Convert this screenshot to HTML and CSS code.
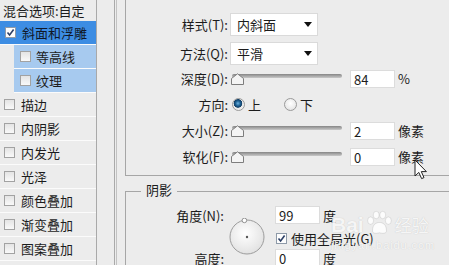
FILE: index.html
```html
<!DOCTYPE html>
<html lang="zh-CN">
<head>
  <meta charset="UTF-8">
  <title>图层样式 - 斜面和浮雕</title>
  <link rel="stylesheet" href="styles.css">
</head>
<body>
  <div class="dialog">
    <!-- 左侧样式列表 -->
    <ul class="style-list">
      <li class="head">混合选项:自定</li>
      <li class="active"><span class="cb checked"><svg viewBox="0 0 9 9"><path d="M1.5 4.5 L3.6 7 L7.6 1.6" /></svg></span>斜面和浮雕</li>
      <li class="sub"><span class="cb"></span>等高线</li>
      <li class="sub"><span class="cb"></span>纹理</li>
      <li><span class="cb"></span>描边</li>
      <li><span class="cb"></span>内阴影</li>
      <li><span class="cb"></span>内发光</li>
      <li><span class="cb"></span>光泽</li>
      <li><span class="cb"></span>颜色叠加</li>
      <li><span class="cb"></span>渐变叠加</li>
      <li><span class="cb"></span>图案叠加</li>
    </ul>
    <div class="gutter"></div>

    <div class="panel">
      <!-- 结构 -->
      <section class="group group-bevel">
        <span class="group-title">结构</span>
        <div class="field field-select first">
          <span class="label">样式(T):</span>
          <div class="select">内斜面<i class="caret"></i></div>
        </div>
        <div class="field field-select">
          <span class="label">方法(Q):</span>
          <div class="select">平滑<i class="caret"></i></div>
        </div>
        <div class="field">
          <span class="label">深度(D):</span>
          <div class="slider"><div class="track"></div><svg class="thumb" viewBox="0 0 13 12"><path d="M0.5 11.5 V5.5 L6.5 0.8 L12.5 5.5 V11.5 Z" /></svg></div>
          <div class="num">84</div><span class="unit">%</span>
        </div>
        <div class="field">
          <span class="label">方向:</span>
          <span class="radio on"></span><span class="radio-text">上</span>
          <span class="radio second"></span><span class="radio-text">下</span>
        </div>
        <div class="field">
          <span class="label">大小(Z):</span>
          <div class="slider"><div class="track"></div><svg class="thumb" viewBox="0 0 13 12"><path d="M0.5 11.5 V5.5 L6.5 0.8 L12.5 5.5 V11.5 Z" /></svg></div>
          <div class="num">2</div><span class="unit">像素</span>
        </div>
        <div class="field">
          <span class="label">软化(F):</span>
          <div class="slider"><div class="track"></div><svg class="thumb" viewBox="0 0 13 12"><path d="M0.5 11.5 V5.5 L6.5 0.8 L12.5 5.5 V11.5 Z" /></svg></div>
          <div class="num">0</div><span class="unit">像素</span>
        </div>
      </section>

      <!-- 阴影 -->
      <section class="group group-shadow">
        <span class="group-title">阴影</span>
        <div class="angle-grid">
          <span class="grid-label">角度(N):</span>
          <svg class="dial" viewBox="0 0 38 38">
            <defs>
              <radialGradient id="dialfill" cx="45%" cy="40%" r="60%">
                <stop offset="0" stop-color="#ffffff" />
                <stop offset="1" stop-color="#e2e2e2" />
              </radialGradient>
            </defs>
            <circle cx="19" cy="19" r="17" fill="url(#dialfill)" stroke="#9c9c9c" stroke-width="1" />
            <circle cx="19" cy="19" r="1.2" fill="#555" />
            <circle cx="16.4" cy="2.4" r="2.3" fill="#fff" stroke="#888" stroke-width="0.9" />
          </svg>
          <div class="ctrl"><div class="num">99</div><span class="unit">度</span></div>
          <div class="ctrl ctrl-check"><span class="cb checked"><svg viewBox="0 0 9 9"><path d="M1.5 4.5 L3.6 7 L7.6 1.6" /></svg></span>使用全局光(G)</div>
          <span class="grid-label">高度:</span>
          <div class="ctrl"><div class="num">0</div><span class="unit">度</span></div>
        </div>
      </section>
    </div>

    <div class="watermark">
      <div class="wm-logo">Bai<svg class="paw" viewBox="0 0 30 26"><ellipse cx="6" cy="11" rx="3.2" ry="4" /><ellipse cx="12" cy="5" rx="3.2" ry="4" /><ellipse cx="19" cy="5" rx="3.2" ry="4" /><ellipse cx="25" cy="11" rx="3.2" ry="4" /><path d="M8 22 C8 15 12 13 15.5 13 C19 13 23 15 23 22 C23 25 19 25 15.5 24 C12 25 8 25 8 22 Z" /></svg><span class="wm-cn">经验</span></div>
      <div class="wm-url">jingyan.baidu.com</div>
    </div>

    <svg class="cursor" viewBox="0 0 14 21"><path d="M1 1 V17 L4.8 13.4 L7.6 19.6 L10 18.6 L7.3 12.6 L12.4 12.6 Z" /></svg>
  </div>
</body>
</html>
```

FILE: styles.css
```css
/*common*/
* {
  box-sizing: border-box;
  margin: 0;
  padding: 0;
}
body {
  background: #ececec;
  font-family: "Noto Sans CJK SC", "Liberation Sans", sans-serif;
  font-size: 13px;
  color: #1c1c1c;
}
.dialog {
  display: flex;
  position: relative;
  width: 449px;
  height: 265px;
  overflow: hidden;
  background: #ececec;
}

/*左侧列表*/
.style-list {
  flex: none;
  width: 97px;
  list-style: none;
  border-right: 1px solid #a9a9a9;
}
.style-list li {
  display: flex;
  align-items: center;
  height: 24px;
  padding-left: 4px;
  border-bottom: 1px solid #fbfbfb;
  white-space: nowrap;
}
.style-list li.head {
  height: 21px;
  padding-left: 3px;
  border-bottom: none;
}
.style-list li.active {
  background: #3d8de3;
  padding-left: 5px;
  color: #101828;
}
.style-list li.sub {
  margin-left: 14px;
  padding-left: 6px;
  background: #a7caef;
}
.style-list li.sub .cb {
  margin-right: 5px;
}
.cb {
  flex: none;
  display: flex;
  width: 11px;
  height: 11px;
  margin-right: 6px;
  border: 1px solid #a2a2a2;
  background: linear-gradient(#e4e4e4, #f9f9f9);
}
.cb.checked {
  background: #fdfdfd;
  border-color: #8e9aa8;
}
.cb svg {
  width: 9px;
  height: 9px;
  fill: none;
  stroke: #2c3f66;
  stroke-width: 1.6;
}
.gutter {
  flex: none;
  width: 18px;
  border-right: 1px solid #a9a9a9;
}

/*右侧面板*/
.panel {
  flex: 1;
  min-width: 0;
  margin-left: 1px;
  margin-right: -30px;
  padding-left: 8px;
  border-left: 1px solid #c2c2c2;
}
.group {
  position: relative;
  border: 1px solid #a6a6a6;
}
.group-title {
  position: absolute;
  left: 15px;
  top: -11px;
  padding: 0 5px;
  line-height: 18px;
  background: #ececec;
}
.group-bevel {
  margin-top: -4px;
  padding: 15px 0 5px;
}
.group-bevel .group-title {
  left: 10px;
  top: -13px;
}
.group-shadow {
  margin-top: 15px;
  padding-top: 13px;
}
.field {
  display: flex;
  align-items: center;
  height: 25px;
  margin-bottom: 1px;
}
.field-select {
  height: 24px;
}
.field.first {
  margin-bottom: 5px;
}
.label {
  flex: none;
  width: 102px;
  text-align: right;
}
.select {
  display: flex;
  align-items: center;
  justify-content: space-between;
  width: 88px;
  height: 23px;
  margin-left: 2px;
  padding-left: 6px;
  background: #fff;
  border: 1px solid #dadada;
}
.caret {
  width: 0;
  height: 0;
  margin-right: 5px;
  border-left: 4px solid transparent;
  border-right: 4px solid transparent;
  border-top: 5px solid #111;
}
.slider {
  position: relative;
  flex: none;
  width: 112px;
  height: 100%;
  margin-left: 2px;
}
.track {
  width: 110px;
  height: 4px;
  margin: 8px 0 0 2px;
  border-radius: 2px;
  background: linear-gradient(#858585, #c9c9c9);
}
.thumb {
  position: absolute;
  left: 1px;
  top: 7px;
  width: 13px;
  height: 12px;
  fill: #f4f4f4;
  stroke: #7d7d7d;
  stroke-width: 1;
}
.num {
  flex: none;
  width: 45px;
  height: 18px;
  margin-left: 8px;
  padding-left: 3px;
  line-height: 17px;
  background: #fff;
  border: 1px solid #dcdcdc;
}
.unit {
  margin-left: 3px;
}
.radio {
  flex: none;
  width: 13px;
  height: 13px;
  margin-left: 4px;
  border-radius: 50%;
  border: 1px solid #9a9a9a;
  background: radial-gradient(circle at 50% 40%, #ffffff, #dedede);
}
.radio.on {
  background: radial-gradient(circle at 45% 40%, #6db3e0 0, #1d5f91 2.5px, #123f66 4px, #e8e8e8 4.6px, #f8f8f8 100%);
}
.radio.second {
  margin-left: 23px;
}
.radio-text {
  margin-left: 3px;
}

/*阴影*/
.angle-grid {
  display: grid;
  grid-template-columns: 98px 46px auto;
  grid-template-rows: 20px 23px 20px;
  align-items: center;
}
.grid-label {
  grid-column: 1;
  text-align: right;
}
.dial {
  grid-column: 2;
  grid-row: 1 / 4;
  justify-self: center;
  width: 38px;
  height: 38px;
}
.ctrl {
  grid-column: 3;
  display: flex;
  align-items: center;
}
.ctrl .num {
  margin-left: 5px;
}
.ctrl-check {
  padding-top: 3px;
  padding-left: 6px;
  white-space: nowrap;
}
.ctrl-check .cb {
  margin-right: 4px;
}

/*水印和鼠标*/
.watermark {
  position: absolute;
  left: 331px;
  top: 208px;
  color: rgba(255, 255, 255, 0.85);
  text-shadow: 0 0 1px rgba(110, 110, 110, 0.35);
  font-family: "Liberation Sans", sans-serif;
  pointer-events: none;
}
.wm-logo {
  display: flex;
  align-items: flex-end;
  height: 30px;
  font-size: 21px;
  font-weight: bold;
  line-height: 26px;
}
.paw {
  width: 28px;
  height: 25px;
  margin: 0 2px 3px 1px;
  fill: rgba(255, 255, 255, 0.85);
  stroke: rgba(140, 140, 140, 0.3);
  stroke-width: 0.8;
}
.wm-cn {
  font-family: "Noto Sans CJK SC", sans-serif;
  font-size: 17px;
  font-weight: normal;
}
.wm-url {
  margin-top: 1px;
  font-size: 11px;
  letter-spacing: 0.9px;
}
.cursor {
  position: absolute;
  left: 414px;
  top: 159px;
  width: 14px;
  height: 21px;
  fill: #fff;
  stroke: #222;
  stroke-width: 1;
}
```
